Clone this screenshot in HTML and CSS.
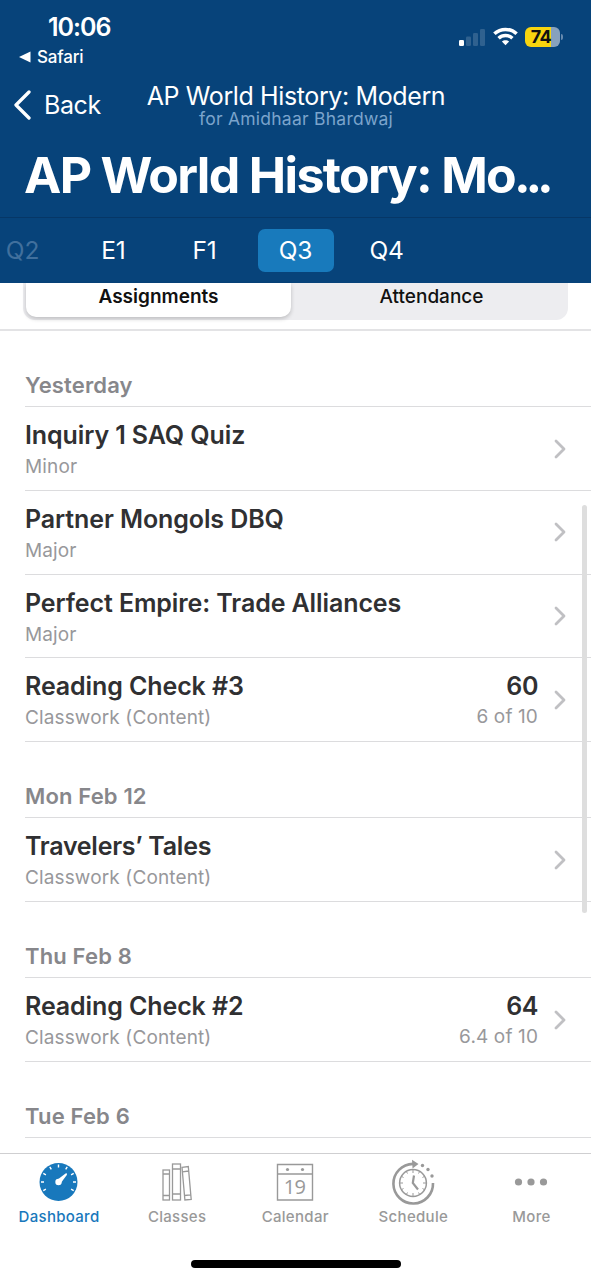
FILE: index.html
```
<!DOCTYPE html>
<html lang="en">
<head>
<meta charset="utf-8">
<title>AP World History: Modern</title>
<link rel="stylesheet" href="styles.css">
</head>
<body>
<div class="screen">
  <header class="header">
    <div class="status">
      <div class="status-left">
        <div class="clock">10:06</div>
        <div class="return-app"><svg width="12" height="12" viewBox="0 0 12 12"><path d="M0 6L11.500 0.500V11.500Z" fill="#fff"/></svg><span>Safari</span></div>
      </div>
      <div class="status-right">
        <svg class="signal" width="28" height="18" viewBox="0 0 28 18"><rect x="0" y="12" width="5" height="6" rx="1.300" fill="#fff"/><g fill="#2f618f"><rect x="7" y="8.500" width="5" height="9.500" rx="1.300"/><rect x="14" y="5" width="5" height="13" rx="1.300"/><rect x="21" y="1" width="5" height="17" rx="1.300"/></g></svg>
        <svg class="wifi" width="25" height="19" viewBox="0 0 25 19" fill="none" stroke="#fff" stroke-width="3.500"><path d="M1.400 6.800C7.500 .9 17.500 .9 23.600 6.800"/><path d="M5.600 11.200C9.500 7.500 15.500 7.500 19.400 11.200"/><path d="M12.500 18.200L8.900 14.600C10.900 12.700 14.100 12.700 16.100 14.600Z" fill="#fff" stroke="none"/></svg>
        <div class="battery"><span>74</span></div>
        <div class="battery-tip"></div>
      </div>
    </div>
    <nav class="nav">
      <div class="back"><svg width="19" height="30" viewBox="0 0 19 30" fill="none" stroke="#fff" stroke-width="3.300" stroke-linecap="round" stroke-linejoin="round"><path d="M16 2L3 15L16 28"/></svg><span>Back</span></div>
      <div class="nav-title"><div class="course">AP World History: Modern</div><div class="student">for Amidhaar Bhardwaj</div></div>
    </nav>
    <h1 class="title">AP World History: Mo<span class="dots">...</span></h1>
    <div class="terms">
      <div class="term faded">Q2</div><div class="term">E1</div><div class="term">F1</div><div class="term selected">Q3</div><div class="term">Q4</div>
    </div>
  </header>
  <div class="toolbar">
    <div class="segments"><div class="segment active">Assignments</div><div class="segment">Attendance</div></div>
  </div>
  <main class="list">
    <h2 class="day">Yesterday</h2>
    <div class="row"><div class="info"><div class="name">Inquiry 1 SAQ Quiz</div><div class="kind">Minor</div></div><svg class="chevron" viewBox="0 0 12 20"><path d="M2 2L10 10L2 18"/></svg></div>
    <div class="row"><div class="info"><div class="name">Partner Mongols DBQ</div><div class="kind">Major</div></div><svg class="chevron" viewBox="0 0 12 20"><path d="M2 2L10 10L2 18"/></svg></div>
    <div class="row"><div class="info"><div class="name">Perfect Empire: Trade Alliances</div><div class="kind">Major</div></div><svg class="chevron" viewBox="0 0 12 20"><path d="M2 2L10 10L2 18"/></svg></div>
    <div class="row"><div class="info"><div class="name">Reading Check #3</div><div class="kind">Classwork (Content)</div></div><div class="score"><div class="name">60</div><div class="kind">6 of 10</div></div><svg class="chevron" viewBox="0 0 12 20"><path d="M2 2L10 10L2 18"/></svg></div>
    <h2 class="day">Mon Feb 12</h2>
    <div class="row"><div class="info"><div class="name tight">Travelers’ Tales</div><div class="kind">Classwork (Content)</div></div><svg class="chevron" viewBox="0 0 12 20"><path d="M2 2L10 10L2 18"/></svg></div>
    <h2 class="day">Thu Feb 8</h2>
    <div class="row"><div class="info"><div class="name">Reading Check #2</div><div class="kind">Classwork (Content)</div></div><div class="score"><div class="name">64</div><div class="kind">6.4 of 10</div></div><svg class="chevron" viewBox="0 0 12 20"><path d="M2 2L10 10L2 18"/></svg></div>
    <h2 class="day">Tue Feb 6</h2>
  </main>
  <div class="scrollbar"></div>
  <footer class="tabbar">
    <div class="tabs">
      <div class="tab current"><svg width="44" height="48" viewBox="0 0 44 48"><circle cx="21.500" cy="24" r="19" fill="#1878bc"/><g transform="translate(-.5 0)"><g stroke="#fff" stroke-width="1.400"><path d="M22 6.500v3M13.300 8.800l1.500 2.600M30.700 8.800l-1.500 2.600M6.800 15.300l2.600 1.500M37.200 15.300l-2.600 1.500M4.500 24h3M39.500 24h-3M6.800 32.700l2.600-1.500M37.200 32.700l-2.600-1.500"/></g><path d="M20.500 22L29 15.500Q31.200 14.600 30.300 17L24 25.500Z" fill="#fff"/><circle cx="22" cy="24" r="3.200" fill="#fff"/></g></svg><span>Dashboard</span></div>
      <div class="tab"><svg width="44" height="48" viewBox="0 0 44 48" fill="none" stroke="#999" stroke-width="1.300"><rect x="8" y="12" width="6.500" height="30"/><path d="M8 16h6.500M8 37.500h6.500"/><rect x="17.500" y="6" width="8" height="36"/><path d="M17.500 11h8M17.500 36h8"/><path d="M27 9.300L33.300 8.500L36.200 41.400L29.900 42Z M27.400 13.800L33.700 13M29.500 37.500L35.800 36.800"/></svg><span>Classes</span></div>
      <div class="tab"><svg width="44" height="48" viewBox="0 0 44 48"><g fill="none" stroke="#999" stroke-width="1.400"><path d="M4.500 6.500h35v35.500h-35zM4.500 16h35"/></g><g fill="#999"><circle cx="14.500" cy="11.500" r="1.600"/><circle cx="29.500" cy="11.500" r="1.600"/></g><text x="21.500" y="35.500" class="date">19</text></svg><span>Calendar</span></div>
      <div class="tab"><svg width="44" height="48" viewBox="0 0 44 48" fill="none" stroke="#999"><path d="M42 25A19.800 19.800 0 1 1 22 5.900" stroke-width="2.600"/><path d="M21 1.800L27.500 6L21.500 10.500Z" fill="#999" stroke="none"/><circle cx="22" cy="25" r="13.400" stroke-width="1.500"/><path d="M22 11.500v3.500M22 35v3.500M8.500 25h3.500M32 25h3.500M15.200 13.300l1.300 2.200M28.800 13.300l-1.300 2.200M10.300 18.200l2.200 1.300M33.700 18.200l-2.200 1.300M10.300 31.800l2.200-1.300M33.700 31.800l-2.200-1.300M15.200 36.700l1.300-2.200M28.800 36.700l-1.300-2.200" stroke-width="1"/><path d="M23 17.500L21.800 25L27 31.500" stroke-width="2.200"/><g fill="#999" stroke="none"><circle cx="31.500" cy="7.500" r="1.700"/><circle cx="37" cy="11.500" r="1.700"/><circle cx="41" cy="18" r="1.700"/></g></svg><span>Schedule</span></div>
      <div class="tab"><svg width="44" height="48" viewBox="0 0 44 48" fill="#999"><circle cx="9.500" cy="24" r="3.600"/><circle cx="22" cy="24" r="3.600"/><circle cx="34.500" cy="24" r="3.600"/></svg><span>More</span></div>
    </div>
    <div class="home"></div>
  </footer>
</div>
</body>
</html>
```
FILE: styles.css
```
* { box-sizing: border-box; }
body { margin: 0; font-family: Inter, "Liberation Sans", sans-serif; background: #fff; }
.screen { position: relative; width: 591px; height: 1280px; display: flex; flex-direction: column; overflow: hidden; }
.header { background: #07437a; color: #fff; height: 283px; flex: none; }
.status { display: flex; justify-content: space-between; height: 75px; padding: 0 28px 0 19px; }
.clock { margin: 12px 0 0 29px; font-size: 25px; line-height: 30px; font-weight: 600; letter-spacing: -1px; }
.return-app { display: flex; align-items: center; gap: 6px; margin-top: 4px; font-size: 17px; line-height: 22px; font-weight: 500; letter-spacing: -0.2px; }
.status-right { display: flex; align-items: flex-start; padding-top: 27px; }
.signal { margin: 1px 6px 0 -1px; }
.wifi { margin-right: 8px; }
.battery { width: 35px; height: 20px; margin-left: -1px; border-radius: 6px; background: linear-gradient(90deg, #f8d50f 74%, #87a1bd 74%); color: #111; font-size: 18px; line-height: 20px; font-weight: 700; text-align: center; letter-spacing: -0.5px; }
.battery span { margin-right: 3px; }
.battery-tip { width: 2px; height: 6px; margin: 7px 0 0 1px; border-radius: 0 3px 3px 0; background: #668aae; }
.nav { display: grid; grid-template-columns: 132px 328px 1fr; height: 65px; }
.back { display: flex; align-items: center; gap: 12px; height: 60px; padding-left: 13px; font-size: 25px; letter-spacing: -0.4px; }
.nav-title { text-align: center; padding-top: 6px; }
.course { font-size: 25px; line-height: 30px; white-space: nowrap; letter-spacing: -0.38px; }
.student { font-size: 17.5px; line-height: 16px; color: #7ba4cc; white-space: nowrap; letter-spacing: 0.25px; }
.title { margin: 0; height: 77px; padding-left: 24px; font-size: 50px; line-height: 71px; font-weight: 700; letter-spacing: -1.65px; white-space: nowrap; }
.dots { letter-spacing: -5.2px; margin-left: -1px; }
.terms { display: flex; align-items: center; gap: 15px; height: 66px; border-top: 1px solid #063767; }
.term { width: 76px; height: 43px; flex: none; border-radius: 7px; text-align: center; font-size: 24.5px; line-height: 43px; letter-spacing: -0.2px; }
.term:first-child { margin-left: -15.5px; }
.faded { color: #41709d; }
.selected { background: #187abc; }
.toolbar { flex: none; height: 48px; padding: 0 23px; border-bottom: 2px solid #e3e3e5; }
.segments { display: grid; grid-template-columns: 268px 1fr; height: 37px; border-radius: 0 0 12px 12px; background: #ededf0; }
.segment { text-align: center; font-size: 19px; line-height: 28px; font-weight: 500; color: #111; padding-left: 4px; }
.active { margin: 0 0 3px 3px; border-radius: 0 0 10px 10px; background: #fff; font-weight: 600; box-shadow: 0 2px 4px #0003; padding: 0; }
.list { flex: 1; min-height: 0; padding-left: 25px; }
.day { margin: 0; height: 76.1px; padding-top: 39px; border-bottom: 1px solid #dcdcde; color: #87878b; font-size: 22px; line-height: 30px; font-weight: 600; letter-spacing: 0.15px; }
.row { display: flex; height: 83.8px; padding-right: 25px; border-bottom: 1px solid #dcdcde; }
.info { flex: 1; padding-top: 12px; }
.name { color: #303032; font-size: 25px; line-height: 32px; font-weight: 600; white-space: nowrap; letter-spacing: -0.1px; }
.tight { letter-spacing: -0.27px; }
.kind { color: #98989b; font-size: 19px; line-height: 24px; margin-top: 4px; white-space: nowrap; letter-spacing: 0.13px; }
.score { text-align: right; padding-top: 12px; }
.score .name { letter-spacing: -0.4px; }
.score .kind { margin-top: 3px; }
.chevron { width: 12px; height: 20px; margin: 31.500px 0 0 16px; fill: none; stroke: #c0c0c3; stroke-width: 2.8; stroke-linecap: round; stroke-linejoin: round; }
.scrollbar { position: absolute; left: 582px; top: 505px; width: 5px; height: 408px; border-radius: 3px; background: #dedede; }
.tabbar { flex: none; height: 127px; border-top: 1px solid #cfcfd1; background: #fff; }
.tabs { display: grid; grid-template-columns: repeat(5, 1fr); padding: 4px 0.5px 0 0; }
.tab { display: flex; flex-direction: column; align-items: center; color: #999; font-size: 15px; line-height: 20px; font-weight: 500; letter-spacing: 0.3px; }
.tab span { margin-top: 1px; }
.current { color: #1878bc; }
.date { fill: #999; font-family: "Open Sans", sans-serif; font-size: 20px; text-anchor: middle; font-weight: 400; letter-spacing: -0.6px; }
.home { width: 210px; height: 8px; margin: 33px auto 0; border-radius: 4px; background: #000; }
```
